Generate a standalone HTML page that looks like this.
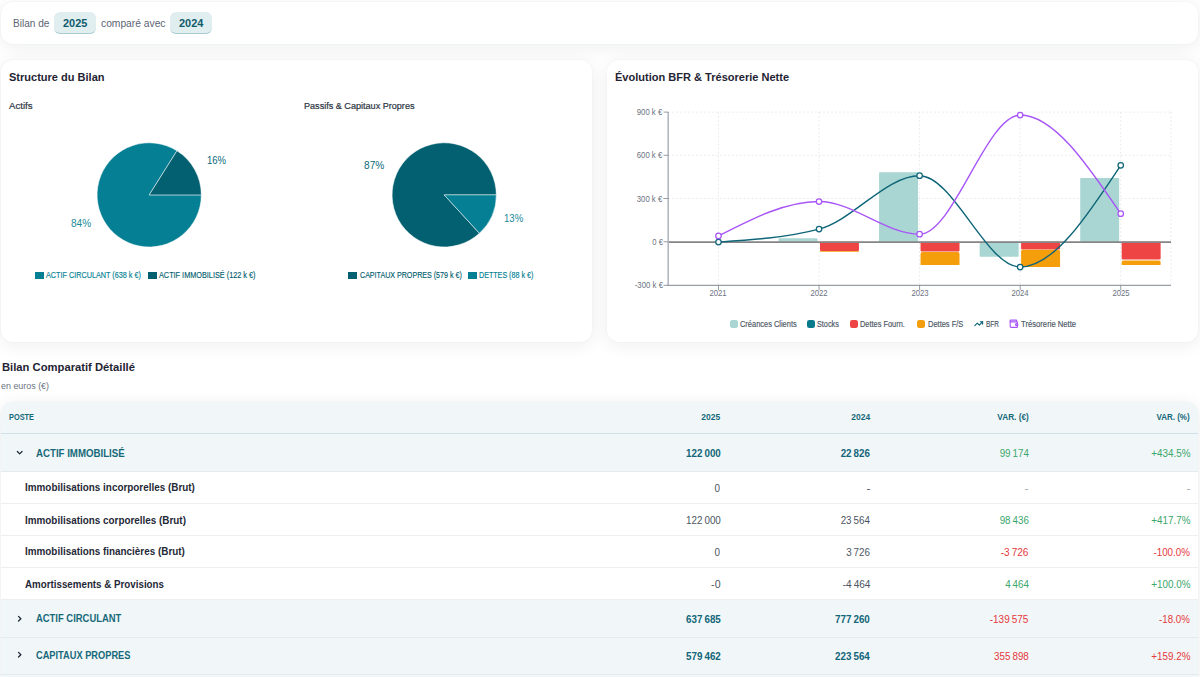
<!DOCTYPE html>
<html lang="fr">
<head>
<meta charset="utf-8">
<title>Bilan</title>
<style>
*{box-sizing:border-box;margin:0;padding:0}
html,body{width:1200px;height:677px;overflow:hidden;background:#fff}
body{font-family:"Liberation Sans",sans-serif;position:relative;color:#1f2937}
.card{position:absolute;background:#fff;border-radius:12px;box-shadow:0 3px 18px rgba(15,23,42,.075),0 0 2px rgba(15,23,42,.05)}
.t{position:absolute;white-space:nowrap;line-height:1}
.lbl{font-size:10.9px;color:#5b6573}
.chip{position:absolute;top:12.3px;height:21.3px;width:41.5px;border-radius:6px;background:#e1eef0;border-bottom:1.2px solid #a9ccd2}
.chipt{font-weight:700;font-size:10.9px;color:#0e5a6b}
.h{font-size:11.8px;font-weight:700;color:#1f2433}
.sub{font-size:9.6px;color:#2b3442;-webkit-text-stroke:.2px}
.eu{font-size:9.4px;color:#6b7280}
.pl{font-size:10.4px}
.lg{font-size:8.6px;-webkit-text-stroke:.15px}
.lg2{font-size:8.6px;color:#4b5563;-webkit-text-stroke:.15px}
.tick{font-size:8.6px;color:#6b7280}
.sw{position:absolute}
svg{position:absolute;left:0;top:0;overflow:visible}
.grid{stroke:#e1e4e8;stroke-width:.8;stroke-dasharray:1.75 2.22}
.axis{stroke:#b3b8c0;stroke-width:1.6}
.tk{stroke:#8a9099;stroke-width:.9}
.axx{stroke:#7f8690;stroke-width:1}
/* table */
.tbl{position:absolute;left:1px;top:401.5px;width:1197.3px;height:300px;border-radius:12px 12px 0 0;overflow:hidden;background:#fff;box-shadow:0 3px 18px rgba(15,23,42,.075),0 0 2px rgba(15,23,42,.06)}
.row{position:absolute;left:0;width:100%;border-bottom:1px solid #eceef0}
.row.g{background:#f1f7f8;border-bottom:1px solid #e2ebed}
.row.hd{background:#f1f7f8;border-bottom:1.4px solid #cde1e7}
.th{font-size:8.6px;font-weight:700;color:#17697a}
.gn{font-size:10.7px;font-weight:700;color:#17697a}
.sn{font-size:10.7px;font-weight:700;color:#1f2937}
.n{font-size:10.7px;color:#4b5563}
.nb{font-size:10.7px;font-weight:700;color:#13667a}
.pos{color:#3aa66c}
.neg{color:#e5383b}
.mut{color:#a3a9b3}
</style>
</head>
<body>
<!-- top bar -->
<div class="card" style="left:1px;top:1.5px;width:1197px;height:42.5px"></div>
<div class="chip" style="left:54px"></div>
<div class="chip" style="left:170.3px"></div>

<!-- cards -->
<div class="card" style="left:1px;top:59.5px;width:590.7px;height:282.5px"></div>
<div class="card" style="left:607.4px;top:59.5px;width:590.8px;height:282.5px"></div>

<!-- table shell -->
<div class="tbl">
  <div class="row hd" style="top:0;height:32.4px"></div>
  <div class="row g" style="top:32.4px;height:38.1px"></div>
  <div class="row s" style="top:70.5px;height:31.8px"></div>
  <div class="row s" style="top:102.3px;height:32px"></div>
  <div class="row s" style="top:134.3px;height:31.8px"></div>
  <div class="row s" style="top:166.1px;height:32px"></div>
  <div class="row g" style="top:198.1px;height:38px"></div>
  <div class="row g" style="top:236.1px;height:37.5px"></div>
  <div class="row g" style="top:273.6px;height:38px"></div>
</div>

<svg width="1200" height="677" viewBox="0 0 1200 677">
<path d="M149.2,194.9L176.96,150.81A52.1,52.1,0,1,0,201.30,194.90Z" fill="#047f94" stroke="#fff" stroke-opacity=".85" stroke-width="0.6" stroke-linejoin="round"/>
<path d="M149.2,194.9L201.30,194.90A52.1,52.1,0,0,0,176.96,150.81Z" fill="#036070" stroke="#fff" stroke-opacity=".85" stroke-width="0.6" stroke-linejoin="round"/>
<path d="M444.2,194.9L496.30,194.90A52.1,52.1,0,1,0,479.40,233.31Z" fill="#036070" stroke="#fff" stroke-opacity=".85" stroke-width="0.6" stroke-linejoin="round"/>
<path d="M444.2,194.9L479.40,233.31A52.1,52.1,0,0,0,496.30,194.90Z" fill="#047f94" stroke="#fff" stroke-opacity=".85" stroke-width="0.6" stroke-linejoin="round"/>
<line x1="668.2" x2="1171.0" y1="112.1" y2="112.1" class="grid"/>
<line x1="668.2" x2="1171.0" y1="155.3" y2="155.3" class="grid"/>
<line x1="668.2" x2="1171.0" y1="198.5" y2="198.5" class="grid"/>
<line x1="718.48" x2="718.48" y1="112.1" y2="285.3" class="grid"/>
<line x1="819.04" x2="819.04" y1="112.1" y2="285.3" class="grid"/>
<line x1="919.60" x2="919.60" y1="112.1" y2="285.3" class="grid"/>
<line x1="1020.16" x2="1020.16" y1="112.1" y2="285.3" class="grid"/>
<line x1="1120.72" x2="1120.72" y1="112.1" y2="285.3" class="grid"/>
<line x1="1171.00" x2="1171.00" y1="112.1" y2="285.3" class="grid"/>
<path d="M779.32,238.20H816.69A0.8,0.8,0,0,1,817.49,239.00V241.80H778.52V239.00A0.8,0.8,0,0,1,779.32,238.20Z" fill="#a9d6d2"/>
<path d="M819.99,241.80H858.96V250.00A1.0,1.0,0,0,1,857.96,251.00H820.99A1.0,1.0,0,0,1,819.99,250.00V241.80Z" fill="#ef4444"/>
<path d="M819.99,251.00H858.96V251.35A0.3499999999999943,0.3499999999999943,0,0,1,858.61,251.70H820.34A0.3499999999999943,0.3499999999999943,0,0,1,819.99,251.35V251.00Z" fill="#f59e0b"/>
<path d="M879.88,172.20H917.25A0.8,0.8,0,0,1,918.05,173.00V241.80H879.08V173.00A0.8,0.8,0,0,1,879.88,172.20Z" fill="#a9d6d2"/>
<path d="M920.55,241.80H959.52V250.50A1.0,1.0,0,0,1,958.52,251.50H921.55A1.0,1.0,0,0,1,920.55,250.50V241.80Z" fill="#ef4444"/>
<path d="M922.35,252.10H957.72A1.8,1.8,0,0,1,959.52,253.90V264.50A0.4,0.4,0,0,1,959.12,264.90H920.95A0.4,0.4,0,0,1,920.55,264.50V253.90A1.8,1.8,0,0,1,922.35,252.10Z" fill="#f59e0b"/>
<path d="M979.64,241.80H1018.61V256.00A0.8,0.8,0,0,1,1017.81,256.80H980.44A0.8,0.8,0,0,1,979.64,256.00V241.80Z" fill="#a9d6d2"/>
<path d="M1021.11,241.80H1060.08V248.40A1.0,1.0,0,0,1,1059.08,249.40H1022.11A1.0,1.0,0,0,1,1021.11,248.40V241.80Z" fill="#ef4444"/>
<path d="M1022.91,249.80H1058.28A1.8,1.8,0,0,1,1060.08,251.60V266.60A0.4,0.4,0,0,1,1059.68,267.00H1021.51A0.4,0.4,0,0,1,1021.11,266.60V251.60A1.8,1.8,0,0,1,1022.91,249.80Z" fill="#f59e0b"/>
<path d="M1081.00,178.00H1118.37A0.8,0.8,0,0,1,1119.17,178.80V241.80H1080.20V178.80A0.8,0.8,0,0,1,1081.00,178.00Z" fill="#a9d6d2"/>
<path d="M1121.67,241.80H1160.64V258.60A1.0,1.0,0,0,1,1159.64,259.60H1122.67A1.0,1.0,0,0,1,1121.67,258.60V241.80Z" fill="#ef4444"/>
<path d="M1123.47,260.50H1158.84A1.8,1.8,0,0,1,1160.64,262.30V264.50A0.4,0.4,0,0,1,1160.24,264.90H1122.07A0.4,0.4,0,0,1,1121.67,264.50V262.30A1.8,1.8,0,0,1,1123.47,260.50Z" fill="#f59e0b"/>
<line x1="668.2" x2="1171.0" y1="242.10000000000002" y2="242.10000000000002" stroke="#858585" stroke-width="1.7"/>
<line x1="668.2" x2="668.2" y1="112.1" y2="285.3" class="axis"/>
<line x1="667.4000000000001" x2="1171.0" y1="285.3" y2="285.3" class="axx"/>
<line x1="663.5" x2="668.2" y1="112.1" y2="112.1" class="tk"/>
<line x1="663.5" x2="668.2" y1="155.3" y2="155.3" class="tk"/>
<line x1="663.5" x2="668.2" y1="198.5" y2="198.5" class="tk"/>
<line x1="663.5" x2="668.2" y1="241.8" y2="241.8" class="tk"/>
<line x1="663.5" x2="668.2" y1="285.3" y2="285.3" class="tk"/>
<line x1="718.48" x2="718.48" y1="285.3" y2="290.0" class="tk"/>
<line x1="819.04" x2="819.04" y1="285.3" y2="290.0" class="tk"/>
<line x1="919.60" x2="919.60" y1="285.3" y2="290.0" class="tk"/>
<line x1="1020.16" x2="1020.16" y1="285.3" y2="290.0" class="tk"/>
<line x1="1120.72" x2="1120.72" y1="285.3" y2="290.0" class="tk"/>
<path d="M718.48,242.10C752.00,239.93,785.52,237.77,819.04,229.10C852.56,220.43,886.08,175.70,919.60,175.70C953.12,175.70,986.64,267.00,1020.16,267.00C1053.68,267.00,1087.20,216.15,1120.72,165.30" fill="none" stroke="#0e6578" stroke-width="1.4"/>
<path d="M718.48,235.90C752.00,218.70,785.52,201.50,819.04,201.50C852.56,201.50,886.08,234.20,919.60,234.20C953.12,234.20,986.64,115.00,1020.16,115.00C1053.68,115.00,1087.20,164.35,1120.72,213.70" fill="none" stroke="#a855f7" stroke-width="1.4"/>
<circle cx="718.48" cy="242.10" r="2.75" fill="#fff" stroke="#0e6578" stroke-width="1.25"/>
<circle cx="819.04" cy="229.10" r="2.75" fill="#fff" stroke="#0e6578" stroke-width="1.25"/>
<circle cx="919.60" cy="175.70" r="2.75" fill="#fff" stroke="#0e6578" stroke-width="1.25"/>
<circle cx="1020.16" cy="267.00" r="2.75" fill="#fff" stroke="#0e6578" stroke-width="1.25"/>
<circle cx="1120.72" cy="165.30" r="2.75" fill="#fff" stroke="#0e6578" stroke-width="1.25"/>
<circle cx="718.48" cy="235.90" r="2.75" fill="#fff" stroke="#a855f7" stroke-width="1.25"/>
<circle cx="819.04" cy="201.50" r="2.75" fill="#fff" stroke="#a855f7" stroke-width="1.25"/>
<circle cx="919.60" cy="234.20" r="2.75" fill="#fff" stroke="#a855f7" stroke-width="1.25"/>
<circle cx="1020.16" cy="115.00" r="2.75" fill="#fff" stroke="#a855f7" stroke-width="1.25"/>
<circle cx="1120.72" cy="213.70" r="2.75" fill="#fff" stroke="#a855f7" stroke-width="1.25"/>
</svg>

<!-- legend swatches -->
<div class="sw" style="left:34.7px;top:272.2px;width:9.2px;height:6.8px;background:#047f94"></div>
<div class="sw" style="left:148.3px;top:272.2px;width:9.2px;height:6.8px;background:#036070"></div>
<div class="sw" style="left:348px;top:272.2px;width:9.2px;height:6.8px;background:#036070"></div>
<div class="sw" style="left:468.1px;top:272.2px;width:9.2px;height:6.8px;background:#047f94"></div>
<div class="sw" style="left:729.8px;top:319.8px;width:7.8px;height:7.8px;border-radius:2.3px;background:#a9d6d2"></div>
<div class="sw" style="left:807.4px;top:319.8px;width:7.8px;height:7.8px;border-radius:2.3px;background:#077b8c"></div>
<div class="sw" style="left:849.9px;top:319.8px;width:7.8px;height:7.8px;border-radius:2.3px;background:#ef4444"></div>
<div class="sw" style="left:917.3px;top:319.8px;width:7.8px;height:7.8px;border-radius:2.3px;background:#f59e0b"></div>
<svg style="left:973.8px;top:319px" width="9.4" height="9.4" viewBox="0 0 24 24" fill="none" stroke="#0e6578" stroke-width="2.9" stroke-linecap="round" stroke-linejoin="round"><polyline points="22 7 13.5 15.5 8.5 10.5 2 17"/><polyline points="16 7 22 7 22 13"/></svg>
<svg style="left:1008.6px;top:319px" width="9.6" height="9.6" viewBox="0 0 24 24" fill="none" stroke="#a855f7" stroke-width="2.9" stroke-linecap="round" stroke-linejoin="round"><path d="M19 7V4a1 1 0 0 0-1-1H5a2 2 0 0 0 0 4h15a1 1 0 0 1 1 1v4h-3a2 2 0 0 0 0 4h3a1 1 0 0 0 1-1v-2a1 1 0 0 0-1-1"/><path d="M3 5v14a2 2 0 0 0 2 2h15a1 1 0 0 0 1-1v-4"/></svg>

<!-- chevrons -->
<svg style="left:15.1px;top:447.6px" width="9.4" height="9.4" viewBox="0 0 24 24" fill="none" stroke="#1f2937" stroke-width="3.2" stroke-linecap="round" stroke-linejoin="round"><path d="m6 9 6 6 6-6"/></svg>
<svg style="left:15.1px;top:613.5px" width="9.4" height="9.4" viewBox="0 0 24 24" fill="none" stroke="#1f2937" stroke-width="3.2" stroke-linecap="round" stroke-linejoin="round"><path d="m9 18 6-6-6-6"/></svg>
<svg style="left:15.1px;top:650.4px" width="9.4" height="9.4" viewBox="0 0 24 24" fill="none" stroke="#1f2937" stroke-width="3.2" stroke-linecap="round" stroke-linejoin="round"><path d="m9 18 6-6-6-6"/></svg>

<!-- text -->
<div class="t lbl" style="left:12.50px;transform-origin:0 50%;top:23px;transform:translateY(-50%) scaleX(0.925)">Bilan de</div>
<div class="t lbl" style="left:101.10px;transform-origin:0 50%;top:23px;transform:translateY(-50%) scaleX(0.943)">comparé avec</div>
<div class="t chipt" style="left:63.00px;transform-origin:0 50%;top:23px;transform:translateY(-50%) scaleX(1.003)">2025</div>
<div class="t chipt" style="left:179.30px;transform-origin:0 50%;top:23px;transform:translateY(-50%) scaleX(1.003)">2024</div>
<div class="t h" style="left:8.90px;transform-origin:0 50%;top:78.0px;transform:translateY(-50%) scaleX(0.934)">Structure du Bilan</div>
<div class="t sub" style="left:8.90px;transform-origin:0 50%;top:105.8px;transform:translateY(-50%) scaleX(1.001)">Actifs</div>
<div class="t sub" style="left:303.90px;transform-origin:0 50%;top:105.8px;transform:translateY(-50%) scaleX(0.946)">Passifs &amp; Capitaux Propres</div>
<div class="t h" style="left:615.40px;transform-origin:0 50%;top:78.0px;transform:translateY(-50%) scaleX(0.935)">Évolution BFR &amp; Trésorerie Nette</div>
<div class="t pl" style="left:206.60px;transform-origin:0 50%;top:161.1px;color:#0b6a7c;transform:translateY(-50%) scaleX(0.918)">16%</div>
<div class="t pl" style="left:71.40px;transform-origin:0 50%;top:224.2px;color:#1a8a9a;transform:translateY(-50%) scaleX(0.971)">84%</div>
<div class="t pl" style="left:363.80px;transform-origin:0 50%;top:166.4px;color:#0b6a7c;transform:translateY(-50%) scaleX(0.976)">87%</div>
<div class="t pl" style="left:504.40px;transform-origin:0 50%;top:218.9px;color:#1a8a9a;transform:translateY(-50%) scaleX(0.923)">13%</div>
<div class="t lg" style="left:46.30px;transform-origin:0 50%;top:275.4px;color:#047f94;transform:translateY(-50%) scaleX(0.843)">ACTIF CIRCULANT (638 k €)</div>
<div class="t lg" style="left:159.20px;transform-origin:0 50%;top:275.4px;color:#036070;transform:translateY(-50%) scaleX(0.849)">ACTIF IMMOBILISÉ (122 k €)</div>
<div class="t lg" style="left:359.50px;transform-origin:0 50%;top:275.4px;color:#036070;transform:translateY(-50%) scaleX(0.827)">CAPITAUX PROPRES (579 k €)</div>
<div class="t lg" style="left:479.10px;transform-origin:0 50%;top:275.4px;color:#047f94;transform:translateY(-50%) scaleX(0.830)">DETTES (88 k €)</div>
<div class="t lg2" style="left:739.70px;transform-origin:0 50%;top:324px;transform:translateY(-50%) scaleX(0.866)">Créances Clients</div>
<div class="t lg2" style="left:817.20px;transform-origin:0 50%;top:324px;transform:translateY(-50%) scaleX(0.845)">Stocks</div>
<div class="t lg2" style="left:860.30px;transform-origin:0 50%;top:324px;transform:translateY(-50%) scaleX(0.861)">Dettes Fourn.</div>
<div class="t lg2" style="left:927.60px;transform-origin:0 50%;top:324px;transform:translateY(-50%) scaleX(0.870)">Dettes F/S</div>
<div class="t lg2" style="left:986.30px;transform-origin:0 50%;top:324px;transform:translateY(-50%) scaleX(0.756)">BFR</div>
<div class="t lg2" style="left:1020.50px;transform-origin:0 50%;top:324px;transform:translateY(-50%) scaleX(0.892)">Trésorerie Nette</div>
<div class="t h" style="left:1.90px;transform-origin:0 50%;top:367.7px;transform:translateY(-50%) scaleX(0.952)">Bilan Comparatif Détaillé</div>
<div class="t eu" style="left:1.40px;transform-origin:0 50%;top:386px;transform:translateY(-50%) scaleX(0.950)">en euros (€)</div>
<div class="t th" style="left:9.30px;transform-origin:0 50%;top:417.4px;transform:translateY(-50%) scaleX(0.858)">POSTE</div>
<div class="t th" style="right:479.70px;transform-origin:100% 50%;top:417.4px;transform:translateY(-50%) scaleX(0.988)">2025</div>
<div class="t th" style="right:329.80px;transform-origin:100% 50%;top:417.4px;transform:translateY(-50%) scaleX(0.988)">2024</div>
<div class="t th" style="right:171.30px;transform-origin:100% 50%;top:417.4px;transform:translateY(-50%) scaleX(0.960)">VAR. (€)</div>
<div class="t th" style="right:9.90px;transform-origin:100% 50%;top:417.4px;transform:translateY(-50%) scaleX(0.931)">VAR. (%)</div>
<div class="t gn" style="left:36.00px;transform-origin:0 50%;top:452.7px;transform:translateY(-50%) scaleX(0.905)">ACTIF IMMOBILISÉ</div>
<div class="t nb" style="right:479.70px;transform-origin:100% 50%;top:453.2px;transform:translateY(-50%) scaleX(0.918)">122&#8239;000</div>
<div class="t nb" style="right:329.80px;transform-origin:100% 50%;top:453.2px;transform:translateY(-50%) scaleX(0.917)">22&#8239;826</div>
<div class="t n pos" style="right:171.30px;transform-origin:100% 50%;top:453.2px;transform:translateY(-50%) scaleX(0.917)">99&#8239;174</div>
<div class="t n pos" style="right:9.90px;transform-origin:100% 50%;top:453.2px;transform:translateY(-50%) scaleX(0.922)">+434.5%</div>
<div class="t sn" style="left:24.60px;transform-origin:0 50%;top:487.1px;transform:translateY(-50%) scaleX(0.926)">Immobilisations incorporelles (Brut)</div>
<div class="t n" style="right:479.70px;transform-origin:100% 50%;top:487.6px;transform:translateY(-50%) scaleX(0.924)">0</div>
<div class="t n" style="right:329.80px;transform-origin:100% 50%;top:487.6px;transform:translateY(-50%) scaleX(1.123)">-</div>
<div class="t n mut" style="right:171.30px;transform-origin:100% 50%;top:487.6px;transform:translateY(-50%) scaleX(1.123)">-</div>
<div class="t n mut" style="right:9.90px;transform-origin:100% 50%;top:487.6px;transform:translateY(-50%) scaleX(1.123)">-</div>
<div class="t sn" style="left:24.60px;transform-origin:0 50%;top:519.6px;transform:translateY(-50%) scaleX(0.925)">Immobilisations corporelles (Brut)</div>
<div class="t n" style="right:479.70px;transform-origin:100% 50%;top:520.1px;transform:translateY(-50%) scaleX(0.918)">122&#8239;000</div>
<div class="t n" style="right:329.80px;transform-origin:100% 50%;top:520.1px;transform:translateY(-50%) scaleX(0.917)">23&#8239;564</div>
<div class="t n pos" style="right:171.30px;transform-origin:100% 50%;top:520.1px;transform:translateY(-50%) scaleX(0.917)">98&#8239;436</div>
<div class="t n pos" style="right:9.90px;transform-origin:100% 50%;top:520.1px;transform:translateY(-50%) scaleX(0.922)">+417.7%</div>
<div class="t sn" style="left:24.60px;transform-origin:0 50%;top:551.4px;transform:translateY(-50%) scaleX(0.925)">Immobilisations financières (Brut)</div>
<div class="t n" style="right:479.70px;transform-origin:100% 50%;top:551.9px;transform:translateY(-50%) scaleX(0.924)">0</div>
<div class="t n" style="right:329.80px;transform-origin:100% 50%;top:551.9px;transform:translateY(-50%) scaleX(0.918)">3&#8239;726</div>
<div class="t n neg" style="right:171.30px;transform-origin:100% 50%;top:551.9px;transform:translateY(-50%) scaleX(0.943)">-3&#8239;726</div>
<div class="t n neg" style="right:9.90px;transform-origin:100% 50%;top:551.9px;transform:translateY(-50%) scaleX(0.912)">-100.0%</div>
<div class="t sn" style="left:24.60px;transform-origin:0 50%;top:583.7px;transform:translateY(-50%) scaleX(0.914)">Amortissements &amp; Provisions</div>
<div class="t n" style="right:479.70px;transform-origin:100% 50%;top:584.2px;transform:translateY(-50%) scaleX(0.988)">-0</div>
<div class="t n" style="right:329.80px;transform-origin:100% 50%;top:584.2px;transform:translateY(-50%) scaleX(0.943)">-4&#8239;464</div>
<div class="t n pos" style="right:171.30px;transform-origin:100% 50%;top:584.2px;transform:translateY(-50%) scaleX(0.918)">4&#8239;464</div>
<div class="t n pos" style="right:9.90px;transform-origin:100% 50%;top:584.2px;transform:translateY(-50%) scaleX(0.922)">+100.0%</div>
<div class="t gn" style="left:36.00px;transform-origin:0 50%;top:618.4px;transform:translateY(-50%) scaleX(0.882)">ACTIF CIRCULANT</div>
<div class="t nb" style="right:479.70px;transform-origin:100% 50%;top:618.9px;transform:translateY(-50%) scaleX(0.918)">637&#8239;685</div>
<div class="t nb" style="right:329.80px;transform-origin:100% 50%;top:618.9px;transform:translateY(-50%) scaleX(0.918)">777&#8239;260</div>
<div class="t n neg" style="right:171.30px;transform-origin:100% 50%;top:618.9px;transform:translateY(-50%) scaleX(0.935)">-139&#8239;575</div>
<div class="t n neg" style="right:9.90px;transform-origin:100% 50%;top:618.9px;transform:translateY(-50%) scaleX(0.909)">-18.0%</div>
<div class="t gn" style="left:35.80px;transform-origin:0 50%;top:655.2px;transform:translateY(-50%) scaleX(0.866)">CAPITAUX PROPRES</div>
<div class="t nb" style="right:479.70px;transform-origin:100% 50%;top:655.7px;transform:translateY(-50%) scaleX(0.918)">579&#8239;462</div>
<div class="t nb" style="right:329.80px;transform-origin:100% 50%;top:655.7px;transform:translateY(-50%) scaleX(0.918)">223&#8239;564</div>
<div class="t n neg" style="right:171.30px;transform-origin:100% 50%;top:655.7px;transform:translateY(-50%) scaleX(0.918)">355&#8239;898</div>
<div class="t n neg" style="right:9.90px;transform-origin:100% 50%;top:655.7px;transform:translateY(-50%) scaleX(0.922)">+159.2%</div>
<div class="t tick" style="right:537.40px;transform-origin:100% 50%;top:112.1px;transform:translateY(-50%) scaleX(0.901)">900 k €</div>
<div class="t tick" style="right:537.40px;transform-origin:100% 50%;top:155.3px;transform:translateY(-50%) scaleX(0.901)">600 k €</div>
<div class="t tick" style="right:537.40px;transform-origin:100% 50%;top:198.5px;transform:translateY(-50%) scaleX(0.901)">300 k €</div>
<div class="t tick" style="right:537.40px;transform-origin:100% 50%;top:241.8px;transform:translateY(-50%) scaleX(0.895)">0 €</div>
<div class="t tick" style="right:537.40px;transform-origin:100% 50%;top:285.3px;transform:translateY(-50%) scaleX(0.911)">-300 k €</div>
<div class="t tick" style="left:718.48px;transform-origin:50% 50%;margin-left:-100px;width:200px;text-align:center;top:293.4px;transform:translateY(-50%) scaleX(0.899)">2021</div>
<div class="t tick" style="left:819.04px;transform-origin:50% 50%;margin-left:-100px;width:200px;text-align:center;top:293.4px;transform:translateY(-50%) scaleX(0.899)">2022</div>
<div class="t tick" style="left:919.6px;transform-origin:50% 50%;margin-left:-100px;width:200px;text-align:center;top:293.4px;transform:translateY(-50%) scaleX(0.899)">2023</div>
<div class="t tick" style="left:1020.16px;transform-origin:50% 50%;margin-left:-100px;width:200px;text-align:center;top:293.4px;transform:translateY(-50%) scaleX(0.899)">2024</div>
<div class="t tick" style="left:1120.72px;transform-origin:50% 50%;margin-left:-100px;width:200px;text-align:center;top:293.4px;transform:translateY(-50%) scaleX(0.899)">2025</div>
</body>
</html>
